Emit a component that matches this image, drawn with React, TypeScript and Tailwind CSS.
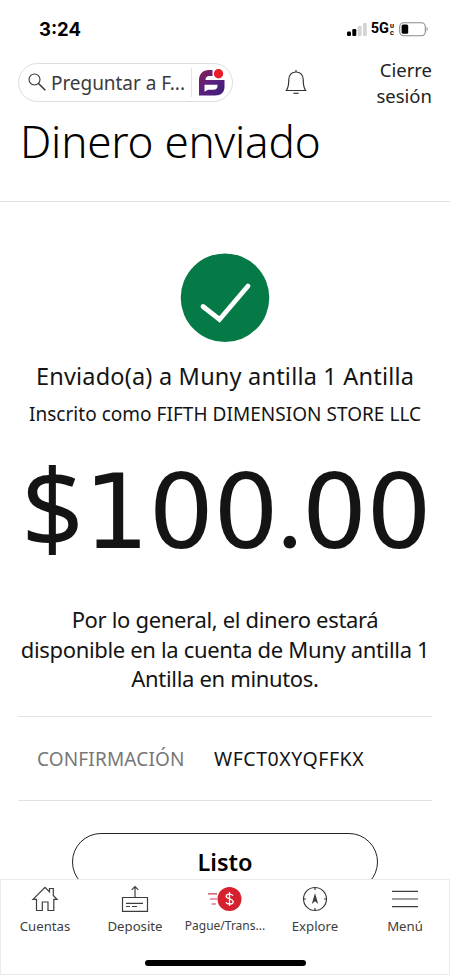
function StatusBar() {
  return (
    <div className="flex h-[58px] items-center justify-between pl-[39px] pr-[21px]">
      <span className="font-['Inter'] text-[18.5px] font-bold leading-none text-black">3:24</span>
      <div className="flex items-center">
        <svg width="21" height="14" viewBox="0 0 21 14">
          <rect x="0" y="9.5" width="4" height="4.5" rx="1.2" fill="#000" />
          <rect x="5.3" y="7" width="4" height="7" rx="1.2" fill="#000" />
          <rect x="10.8" y="4" width="3.8" height="10" rx="1" fill="#d4d4d4" />
          <rect x="16" y="1" width="3.8" height="13" rx="1" fill="#d4d4d4" />
        </svg>
        <span className="ml-[3px] font-['Roboto'] text-[14.5px] font-bold leading-none text-black">5G</span>
        <span className="ml-px flex flex-col font-['Roboto'] text-[6px] font-black leading-[7px] text-black">
          <span className="h-[7px]">U</span>
          <span className="h-[7px]">C</span>
        </span>
        <svg className="ml-[5px]" width="30" height="15" viewBox="0 0 30 15">
          <rect x="0.7" y="0.7" width="25.6" height="13" rx="4" fill="none" stroke="#8a8a8a" strokeWidth="1.1" />
          <rect x="2.6" y="2.6" width="6.6" height="9.2" rx="1.6" fill="#000" />
          <path d="M27.6 5v4.4c1.4-.5 1.4-3.9 0-4.4z" fill="#8a8a8a" />
        </svg>
      </div>
    </div>
  )
}

function FargoLogo() {
  return (
    <svg width="28" height="28" viewBox="0 0 28 28">
      <defs>
        <linearGradient id="fargo" x1="0" y1="0" x2="1" y2="1">
          <stop offset="0" stopColor="#8a1d4c" />
          <stop offset="0.45" stopColor="#5c2080" />
          <stop offset="1" stopColor="#3f1c78" />
        </linearGradient>
      </defs>
      <path
        d="M14.500 1H11C5 1 1 5 1 11V26.500H17C23 26.500 26.500 23 26.500 18V11H7.500V10.500C7.500 8.500 9 7 11.500 7H14.500Z"
        fill="url(#fargo)"
      />
      <path d="M6.500 15.800H19.500V17C19.500 19.500 18 20.800 15.500 20.800H10L6.500 22.800Z" fill="#fff" />
      <circle cx="20.500" cy="4.800" r="4.700" fill="#ea1c2c" />
    </svg>
  )
}

function Header() {
  return (
    <div className="flex h-[52px] items-start">
      <div className="ml-[18px] mt-[5px] flex h-[39px] w-[215px] shrink-0 items-center rounded-full border border-[#dedede] pl-[9px]">
        <svg width="19" height="19" viewBox="0 0 19 19" fill="none" stroke="#333">
          <circle cx="6.500" cy="6.500" r="5.500" strokeWidth="1.100" />
          <path d="M10.500 10.500L17.300 17.300" strokeWidth="1.500" />
        </svg>
        <span className="ml-[4px] w-[135px] whitespace-nowrap pt-[2px] text-[19px] leading-none tracking-[-0.05px] text-[#3b3b3b]">
          Preguntar a F...
        </span>
        <span className="ml-[5px] mr-[6px] h-[29px] w-px bg-[#e4e4e4]" />
        <FargoLogo />
      </div>
      <svg className="ml-[52px] mt-[11px]" width="22" height="27" viewBox="0 0 22 27" fill="none" stroke="#333" strokeWidth="1.200">
        <path d="M11 1V3M11 3C6.500 3 3.800 6 3.800 10.500C3.800 15.500 3.300 19 1.300 21.500H20.700C18.700 19 18.200 15.500 18.200 10.500C18.200 6 15.500 3 11 3Z" />
        <path d="M8.500 24.300H13.500" />
      </svg>
      <div className="-mt-px ml-auto mr-[18px] text-right text-[18.5px] leading-[25.5px] text-[#222]">
        Cierre
        <br />
        sesión
      </div>
    </div>
  )
}

function NavItem({ label, small, children }: { label: string; small?: boolean; children: React.ReactNode }) {
  return (
    <div className="flex w-[90px] flex-col items-center">
      <div className="mb-[2px] flex h-[37px] items-center justify-center">{children}</div>
      <span className={small ? 'whitespace-nowrap text-[12px] leading-[14px]' : 'whitespace-nowrap text-[13.2px] leading-[14px]'}>
        {label}
      </span>
    </div>
  )
}

function BottomNav() {
  return (
    <div className="flex h-[96px] flex-col border border-[#eaeaea] bg-white text-[#3d3d3d]">
      <div className="-mx-px flex">
        <NavItem label="Cuentas">
          <svg width="28" height="28" viewBox="0 0 28 28" fill="none" stroke="#3d3d3d" strokeWidth="1.200">
            <path d="M2 14.300L14 2.300L18.500 6.800V3.500H22.300V10.500L26 14.300H22.800V25.500H17V17H11.300V25.500H5.500V14.300Z" />
          </svg>
        </NavItem>
        <NavItem label="Deposite">
          <svg width="28" height="28" viewBox="0 0 28 28" fill="none" stroke="#3d3d3d" strokeWidth="1.200">
            <path d="M1.500 12.500H26.500V26.300H1.500ZM14 12.500V1.500M10.700 4.800L14 1.500L17.300 4.800M5 18.300H22M5 21.500H9M11 21.500H16" />
          </svg>
        </NavItem>
        <NavItem label="Pague/Trans..." small>
          <svg width="36" height="28" viewBox="0 0 36 28" fill="none">
            <path d="M1 8.800H10M3 14H10M4.500 19H9" stroke="#c9434c" strokeWidth="1.200" />
            <circle cx="22.500" cy="14" r="12" fill="#d5202d" />
            <path d="M22.500 7V21M26 10.600C24.500 8.800 19.200 8.500 19.200 11.300C19.200 14.300 26.200 13.300 26.200 16.700C26.200 19.800 20.500 19.500 18.800 17.400" stroke="#fff" strokeWidth="1.300" />
          </svg>
        </NavItem>
        <NavItem label="Explore">
          <svg width="26" height="26" viewBox="0 0 26 26" fill="none" stroke="#3d3d3d" strokeWidth="1.200">
            <circle cx="13" cy="13" r="11.500" />
            <path d="M13 1.500V4M13 22V24.500M1.500 13H4M22 13H24.500" />
            <path d="M13 7L16.200 18L13 15.300L9.800 18Z" fill="#3d3d3d" stroke="none" />
          </svg>
        </NavItem>
        <NavItem label="Menú">
          <svg width="26" height="18" viewBox="0 0 26 18" stroke="#3d3d3d" strokeWidth="1.200">
            <path d="M0 1.300H26M0 9H26M0 16.700H26" />
          </svg>
        </NavItem>
      </div>
      <div className="mx-auto mt-[27px] h-[6px] w-[161px] rounded-full bg-black" />
    </div>
  )
}

export default function App() {
  return (
    <div className="flex h-[975px] w-[450px] flex-col overflow-hidden bg-white font-['Noto_Sans',sans-serif] text-[#141414]">
      <StatusBar />
      <Header />

      <div className="h-[92px] shrink-0 border-b border-[#e2e2e2] pl-[20px]">
        <h1 className="whitespace-nowrap pt-[2px] text-[44px] font-light leading-[58px] tracking-[-0.2px] text-black">Dinero enviado</h1>
      </div>

      <main className="flex h-[677px] shrink-0 flex-col items-center overflow-hidden">
        <svg className="mt-[51px] shrink-0" width="90" height="90" viewBox="0 0 90 90">
          <circle cx="45" cy="44.700" r="44.300" fill="#067a46" />
          <path d="M23 53.500L39.500 66.500L68 33" fill="none" stroke="#fff" strokeWidth="4.800" strokeLinecap="round" />
        </svg>
        <p className="mt-[15px] whitespace-nowrap text-[23.5px] leading-[36px] tracking-[0.2px]">Enviado(a) a Muny antilla 1 Antilla</p>
        <p className="mt-[7px] whitespace-nowrap text-[19px] leading-[26px] tracking-[0.03px]">Inscrito como FIFTH DIMENSION STORE LLC</p>
        <div className="mt-[18px] flex h-[120px] items-baseline whitespace-nowrap pl-[2px] font-['DejaVu_Sans',sans-serif] text-[103px] leading-[120px]">
          <span className="font-['Noto_Sans',sans-serif] text-[110px]">$</span>
          <span className="tracking-[-0.8px]">100</span>
          <span className="font-['Lato',sans-serif] text-[100px]">.</span>
          <span className="tracking-[-0.8px]">00</span>
        </div>
        <p className="mt-[40px] whitespace-nowrap text-center text-[22px] leading-[29.5px] tracking-[-0.33px]">
          Por lo general, el dinero estará
          <br />
          disponible en la cuenta de Muny antilla 1
          <br />
          Antilla en minutos.
        </p>
        <div className="mt-[22px] flex h-[85px] w-[414px] shrink-0 items-center border-y border-[#e2e2e2] pl-[19px] pt-[2px] text-[19px]">
          <span className="w-[177px] tracking-[0.15px] text-[#777]">CONFIRMACIÓN</span>
          <span className="whitespace-nowrap text-[19.5px] tracking-[0.55px]">WFCT0XYQFFKX</span>
        </div>
        <button className="mt-[32px] h-[58px] w-[306px] shrink-0 rounded-full border border-[#222] pt-[2px] text-[23.5px] font-semibold text-black">
          Listo
        </button>
      </main>

      <BottomNav />
    </div>
  )
}
